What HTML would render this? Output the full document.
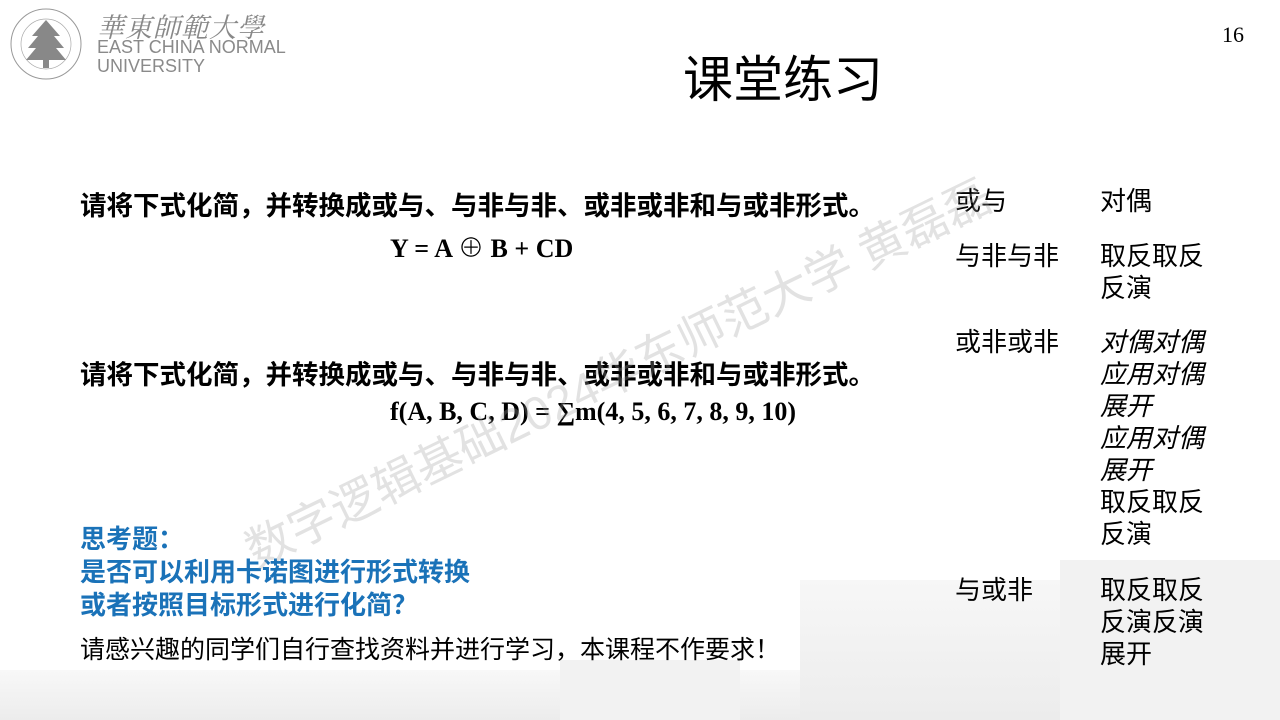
<!DOCTYPE html>
<html><head><meta charset="utf-8"><style>
body{margin:0;width:1280px;height:720px;position:relative;overflow:hidden;background:#fff;font-family:"Liberation Sans","Noto Sans CJK SC",sans-serif;color:#000}
.a{position:absolute;white-space:nowrap}
.b{font-weight:bold;font-size:26.5px}
.blue{color:#1a72b8;font-weight:bold;font-size:26px;line-height:33px}
.r{font-size:26px;line-height:32px}
.m{font-family:"Liberation Serif","Noto Serif CJK SC",serif;font-weight:bold;font-size:26px}
</style></head><body>
<div class="a" style="left:800px;top:580px;width:480px;height:140px;background:linear-gradient(#f7f7f7,#ececec)"></div>
<div class="a" style="left:1060px;top:560px;width:220px;height:160px;background:#f2f2f2"></div>
<div class="a" style="left:0;top:670px;width:800px;height:50px;background:linear-gradient(#f8f8f8,#ececec)"></div>
<div class="a" style="left:560px;top:660px;width:180px;height:60px;background:#f2f2f2"></div>
<svg class="a" style="left:8px;top:6px" width="76" height="76" viewBox="0 0 76 76"><circle cx="38" cy="38" r="35" fill="none" stroke="#999" stroke-width="1"/><circle cx="38" cy="38" r="25" fill="none" stroke="#aaa" stroke-width="0.7"/><path d="M38 14 L24 30 H30 L20 42 H28 L18 54 H58 L48 42 H56 L46 30 H52 Z" fill="#888"/><rect x="35" y="54" width="6" height="8" fill="#888"/></svg>
<div class="a" style="left:97px;top:6px;font-size:27px;color:#888;font-family:'Noto Serif CJK SC',serif;letter-spacing:1px;font-style:italic">華東師範大學</div>
<div class="a" style="left:97px;top:38px;font-size:18px;color:#8a8a8a;line-height:19px">EAST CHINA NORMAL<br>UNIVERSITY</div>
<div class="a" style="left:1222px;top:22px;font-size:22px;font-family:'Liberation Serif',serif">16</div>
<div class="a" style="left:683px;top:40px;font-size:50px">课堂练习</div>
<div class="a b" style="left:80px;top:184px">请将下式化简，并转换成或与、与非与非、或非或非和与或非形式。</div>
<div class="a m" style="left:390px;top:228px">Y = A ⊕ B + CD</div>
<div class="a b" style="left:80px;top:353px">请将下式化简，并转换成或与、与非与非、或非或非和与或非形式。</div>
<div class="a m" style="left:390px;top:397px">f(A, B, C, D) = ∑m(4, 5, 6, 7, 8, 9, 10)</div>
<div class="a blue" style="left:80px;top:523px">思考题：<br>是否可以利用卡诺图进行形式转换<br>或者按照目标形式进行化简？</div>
<div class="a" style="left:80px;top:630px;font-size:25px">请感兴趣的同学们自行查找资料并进行学习，本课程不作要求！</div>
<div class="a r" style="left:955px;top:185px">或与</div>
<div class="a r" style="left:1100px;top:185px">对偶</div>
<div class="a r" style="left:955px;top:240px">与非与非</div>
<div class="a r" style="left:1100px;top:240px">取反取反<br>反演</div>
<div class="a r" style="left:955px;top:326px">或非或非</div>
<div class="a r" style="left:1100px;top:326px"><i>对偶对偶<br>应用对偶<br>展开<br>应用对偶<br>展开</i><br>取反取反<br>反演</div>
<div class="a r" style="left:955px;top:574px">与或非</div>
<div class="a r" style="left:1100px;top:574px">取反取反<br>反演反演<br>展开</div>
<div class="a" style="left:262px;top:512px;font-size:47px;color:rgba(160,160,160,0.3);transform:rotate(-26deg);transform-origin:0 100%">数字逻辑基础2024华东师范大学 黄磊磊</div>
</body></html>
